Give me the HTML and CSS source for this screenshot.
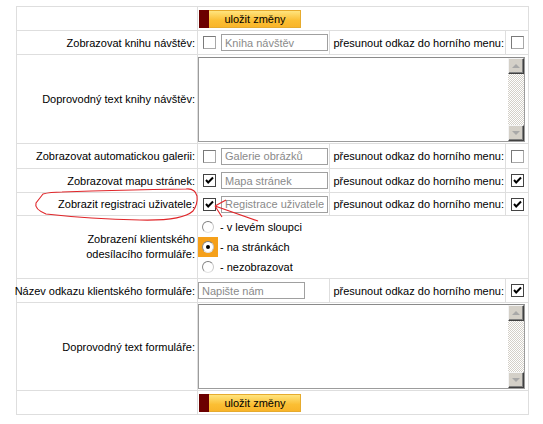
FILE: index.html
```html
<!DOCTYPE html>
<html lang="cs">
<head>
    <meta charset="UTF-8">
    <title>Nastavení stránek</title>
    <link rel="stylesheet" href="styles.css">
</head>
<body>
    <div class="settings">
        <div class="cell"></div>
        <div class="cell wide"><button class="save"><span>uložit změny</span></button></div>

        <div class="cell label">Zobrazovat knihu návštěv:</div>
        <div class="cell field"><span class="chk"></span><input class="txt" placeholder="Kniha návštěv"></div>
        <div class="cell move">přesunout odkaz do horního menu:</div>
        <div class="cell tick"><span class="chk"></span></div>

        <div class="cell label">Doprovodný text knihy návštěv:</div>
        <div class="cell wide memo-cell">
            <div class="memo">
                <textarea></textarea>
                <div class="sbar"><span class="sbtn up"></span><span class="track"></span><span class="sbtn down"></span></div>
            </div>
        </div>

        <div class="cell label">Zobrazovat automatickou galerii:</div>
        <div class="cell field"><span class="chk"></span><input class="txt" placeholder="Galerie obrázků"></div>
        <div class="cell move">přesunout odkaz do horního menu:</div>
        <div class="cell tick"><span class="chk"></span></div>

        <div class="cell label">Zobrazovat mapu stránek:</div>
        <div class="cell field"><span class="chk on"><svg viewBox="0 0 11 11"><polyline points="2,5 4.2,7.5 9,2.5"/></svg></span><input class="txt" placeholder="Mapa stránek"></div>
        <div class="cell move">přesunout odkaz do horního menu:</div>
        <div class="cell tick"><span class="chk on"><svg viewBox="0 0 11 11"><polyline points="2,5 4.2,7.5 9,2.5"/></svg></span></div>

        <div class="cell label">Zobrazit registraci uživatele:</div>
        <div class="cell field"><span class="chk on"><svg viewBox="0 0 11 11"><polyline points="2,5 4.2,7.5 9,2.5"/></svg></span><input class="txt" placeholder="Registrace uživatele"></div>
        <div class="cell move">přesunout odkaz do horního menu:</div>
        <div class="cell tick"><span class="chk on"><svg viewBox="0 0 11 11"><polyline points="2,5 4.2,7.5 9,2.5"/></svg></span></div>

        <div class="cell label two">Zobrazení klientského<br>odesílacího formuláře:</div>
        <div class="cell wide radios">
            <div class="opt"><span class="rbox"><span class="radio"></span></span>- v levém sloupci</div>
            <div class="opt on"><span class="rbox"><span class="radio"></span></span>- na stránkách</div>
            <div class="opt"><span class="rbox"><span class="radio"></span></span>- nezobrazovat</div>
        </div>

        <div class="cell label">Název odkazu klientského formuláře:</div>
        <div class="cell field flush"><input class="txt" placeholder="Napište nám"></div>
        <div class="cell move">přesunout odkaz do horního menu:</div>
        <div class="cell tick"><span class="chk on"><svg viewBox="0 0 11 11"><polyline points="2,5 4.2,7.5 9,2.5"/></svg></span></div>

        <div class="cell label">Doprovodný text formuláře:</div>
        <div class="cell wide memo-cell">
            <div class="memo">
                <textarea></textarea>
                <div class="sbar"><span class="sbtn up"></span><span class="track"></span><span class="sbtn down"></span></div>
            </div>
        </div>

        <div class="cell"></div>
        <div class="cell wide"><button class="save"><span>uložit změny</span></button></div>
    </div>

    <!-- red marker drawn over the form -->
    <svg class="marker" viewBox="0 0 543 424">
        <path d="M43 194 L36 203 Q34 209 46 214 Q90 219 140 220 Q182 221 193 211 Q198 204 197 196 Q195 188 186 189 Q120 190 62 192 Q50 192 43 194 Z"/>
        <path d="M258 221 L215 206 M215 206 L226 200 M215 206 L222 217"/>
    </svg>
</body>
</html>
```

FILE: styles.css
```css
body {
    margin: 0;
    font-family: "Liberation Sans", Arial, sans-serif;
    font-size: 11px;
    color: #000;
    background: #fff;
    position: relative;
}
.settings {
    display: grid;
    grid-template-columns: 180px 131px 175px 22px;
    grid-template-rows: 23px 23px 88px 24px 23px 22px 62px 23px 87px 23px;
    gap: 1px;
    padding: 1px;
    width: max-content;
    margin: 6px 0 0 16px;
    background: #dedede;
}
.cell {
    background: #fff;
    display: flex;
    align-items: center;
}
.wide {
    grid-column: 2 / 5;
}
.label {
    justify-content: flex-end;
    text-align: right;
    padding-right: 2px;
    white-space: nowrap;
}
.label.two {
    line-height: 15px;
}
.field {
    padding-left: 5px;
    gap: 5px;
}
.field.flush {
    padding-left: 0;
}
.move {
    justify-content: flex-end;
    padding-right: 1px;
    white-space: nowrap;
}
.tick {
    justify-content: center;
    padding-left: 1px;
}
.chk {
    width: 13px;
    height: 13px;
    box-sizing: border-box;
    border: 1px solid #7a7a7a;
    border-right-color: #a8a8a8;
    border-bottom-color: #a8a8a8;
    background: #fff;
    display: inline-flex;
    align-items: center;
    justify-content: center;
}
.chk.on {
    border-color: #444;
}
.chk svg {
    width: 11px;
    height: 11px;
    fill: none;
    stroke: #000;
    stroke-width: 2;
}
.txt {
    width: 107px;
    height: 17px;
    box-sizing: border-box;
    border: 1px solid #a0a0a0;
    padding: 0 3px;
    margin: 0;
    font-family: "Liberation Sans", Arial, sans-serif;
    font-size: 11px;
    color: #888;
    outline: none;
}
.txt::placeholder {
    color: #8a8a8a;
    opacity: 1;
}
.save {
    display: flex;
    width: 102px;
    height: 18px;
    margin-left: 1px;
    padding: 0;
    border: 1px solid #e6ab2e;
    border-left: none;
    background: linear-gradient(#ffe47e, #fbbe33 60%, #f9b52a);
    font-family: "Liberation Sans", Arial, sans-serif;
    font-size: 11px;
    color: #000;
    cursor: pointer;
}
.save::before {
    content: "";
    width: 10px;
    background: #6b0000;
    margin-top: -1px;
    margin-bottom: -1px;
}
.save span {
    flex: 1;
    align-self: center;
    text-align: center;
    padding-left: 1px;
}
.memo-cell {
    align-items: center;
}
.memo {
    display: flex;
    width: 327px;
    height: 85px;
    box-sizing: border-box;
    border: 1px solid #9c9c9c;
    border-top-color: #8a8a8a;
    background: #fff;
}
.memo textarea {
    flex: 1;
    border: none;
    resize: none;
    outline: none;
    padding: 2px;
    margin: 0;
    font-family: "Liberation Sans", Arial, sans-serif;
    font-size: 11px;
}
.sbar {
    width: 16px;
    display: flex;
    flex-direction: column;
}
.track {
    flex: 1;
    background: repeating-conic-gradient(#d4d0c8 0 25%, #fff 0 50%) 0 0 / 2px 2px;
}
.sbtn {
    height: 16px;
    box-sizing: border-box;
    background: #d4d0c8;
    border: 1px solid;
    border-color: #f4f4f4 #404040 #404040 #f4f4f4;
    box-shadow: inset -1px -1px #808080;
    display: flex;
    align-items: center;
    justify-content: center;
}
.sbtn::after {
    content: "";
    border-left: 4px solid transparent;
    border-right: 4px solid transparent;
}
.sbtn.up::after {
    border-bottom: 4px solid #a8a8a8;
}
.sbtn.down::after {
    border-top: 4px solid #a8a8a8;
}
.radios {
    flex-direction: column;
    align-items: flex-start;
    justify-content: center;
}
.opt {
    height: 20px;
    display: flex;
    align-items: center;
    gap: 2px;
}
.rbox {
    width: 20px;
    height: 20px;
    display: flex;
    align-items: center;
    justify-content: center;
}
.opt.on .rbox {
    background: #f5a01a;
}
.radio {
    width: 12px;
    height: 12px;
    box-sizing: border-box;
    border-radius: 50%;
    border: 1px solid;
    border-color: #7c7c7c #c8c8c8 #e2e2e2 #8c8c8c;
    background: #fff;
    display: flex;
    align-items: center;
    justify-content: center;
}
.opt.on .radio::after {
    content: "";
    width: 4px;
    height: 4px;
    border-radius: 50%;
    background: #000;
}
.marker {
    position: absolute;
    left: 0;
    top: 0;
    width: 543px;
    height: 424px;
    pointer-events: none;
    fill: none;
    stroke: #e0262a;
    stroke-width: 1.1;
}
```
